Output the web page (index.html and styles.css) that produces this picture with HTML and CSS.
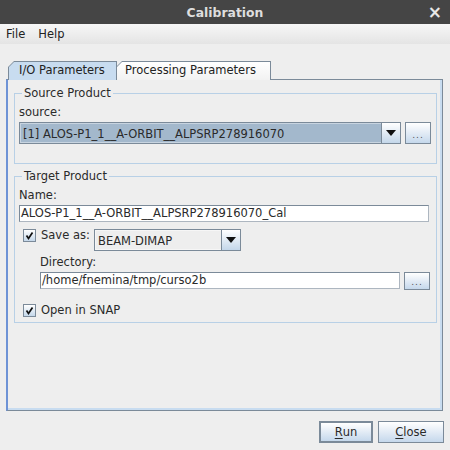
FILE: index.html
```html
<!DOCTYPE html>
<html>
<head>
<meta charset="utf-8">
<link rel="stylesheet" href="styles.css">
</head>
<body>
<div class="titlebar">
  <span class="title">Calibration</span>
  <span class="close">×</span>
</div>
<div class="menubar">
  <span class="menu">File</span>
  <span class="menu">Help</span>
</div>
<div class="main">
  <div class="tabs">
    <div class="tab tab-active"><div class="tab-in">I/O Parameters</div></div>
    <div class="tab tab-idle"><div class="tab-in">Processing Parameters</div></div>
  </div>
  <div class="panel">
    <fieldset class="group group-source">
      <legend>Source Product</legend>
      <div class="label">source:</div>
      <div class="row">
        <div class="combo combo-source">
          <div class="combo-text">[1] ALOS-P1_1__A-ORBIT__ALPSRP278916070</div>
          <div class="combo-btn"><svg width="10" height="6" viewBox="0 0 10 6"><path d="M0 0H10L5 6Z" fill="#111"/></svg></div>
        </div>
        <div class="btn dots">...</div>
      </div>
    </fieldset>
    <fieldset class="group group-target">
      <legend>Target Product</legend>
      <div class="label">Name:</div>
      <div class="field field-name">ALOS-P1_1__A-ORBIT__ALPSRP278916070_Cal</div>
      <div class="check-row save-row">
        <div class="check"><svg width="11" height="11" viewBox="0 0 11 11"><path d="M2.5 5.5L4.5 8.5L8.5 2.5" fill="none" stroke="#111" stroke-width="1.7"/></svg></div>
        <span class="check-label">Save as:</span>
        <div class="combo combo-format">
          <div class="combo-text">BEAM-DIMAP</div>
          <div class="combo-btn"><svg width="10" height="6" viewBox="0 0 10 6"><path d="M0 0H10L5 6Z" fill="#111"/></svg></div>
        </div>
      </div>
      <div class="indent">
        <div class="label">Directory:</div>
        <div class="row">
          <div class="field field-dir">/home/fnemina/tmp/curso2b</div>
          <div class="btn dots dots-dir">...</div>
        </div>
      </div>
      <div class="check-row open-row">
        <div class="check"><svg width="11" height="11" viewBox="0 0 11 11"><path d="M2.5 5.5L4.5 8.5L8.5 2.5" fill="none" stroke="#111" stroke-width="1.7"/></svg></div>
        <span class="check-label">Open in SNAP</span>
      </div>
    </fieldset>
  </div>
  <div class="footer">
    <div class="btn action run"><u>R</u>un</div>
    <div class="btn action close-btn"><u>C</u>lose</div>
  </div>
</div>
</body>
</html>
```

FILE: styles.css
```css
* { box-sizing: border-box; }
html, body { margin: 0; padding: 0; }
body {
  width: 450px;
  height: 450px;
  overflow: hidden;
  background: #eeeeee;
  font-family: "DejaVu Sans", sans-serif;
  font-size: 11.5px;
  color: #2a2a2a;
  display: flex;
  flex-direction: column;
}
.titlebar {
  height: 24px;
  background: #454545;
  display: flex;
  align-items: center;
  justify-content: center;
  position: relative;
  color: #dedede;
}
.title { font-weight: bold; font-size: 12.4px; }
.close {
  position: absolute;
  right: 8px;
  top: 2px;
  font-size: 17px;
  font-weight: bold;
  color: #e8e8e8;
}
.menubar {
  height: 20px;
  background: linear-gradient(#f7f7f7, #e4e4e4);
  display: flex;
  align-items: center;
  padding-left: 6px;
  gap: 13px;
  color: #222;
}
.main {
  flex: 1;
  display: flex;
  flex-direction: column;
  padding: 17px 7px 0 6px;
}
.tabs {
  display: flex;
  padding-left: 2px;
  height: 19px;
  position: relative;
  z-index: 1;
}
.tab {
  height: 19px;
  background: #7b8a99;
  padding: 1px 1px 0 1px;
  clip-path: polygon(0 6px, 6px 0, 100% 0, 100% 100%, 0 100%);
}
.tab-in {
  height: 18px;
  padding-left: 10px;
  line-height: 17px;
  clip-path: polygon(0 5px, 5px 0, 100% 0, 100% 100%, 0 100%);
  color: #222;
}
.tab-active { width: 109px; }
.tab-active .tab-in { background: #c8dcf0; height: 19px; }
.tab-idle { width: 155px; margin-left: -1px; }
.tab-idle .tab-in { background: linear-gradient(#ffffff, #f2f2f2); padding-left: 8px; }
.panel {
  flex: 1;
  border: 1px solid #7b8a99;
  border-left: 2px solid #6e93d6;
  box-shadow: inset -2px -2px 0 #c8dcf0;
  padding: 6px 5px 0 6px;
  margin-top: -1px;
}
.group {
  margin: 0;
  border: 1px solid #b8d0e6;
  padding: 5px 4px 0 4px;
  min-width: 0;
}
.group legend {
  padding: 0 2px;
  margin-left: 3px;
  line-height: 14px;
  color: #2a2a2a;
}
.group-source { height: 78px; padding-bottom: 18px; }
.group-target { margin-top: 5px; height: 154px; }
.label { line-height: 14px; height: 14px; }
.row { display: flex; align-items: stretch; margin-top: 3px; }
.combo {
  display: flex;
  border: 1px solid #7b8a99;
  background: #a3b8cc;
}
.combo-source { width: 382px; height: 22px; }
.combo-text {
  flex: 1;
  padding-left: 2px;
  line-height: 20px;
  border: 1px solid #c8d4e0;
  border-right: none;
  white-space: nowrap;
  overflow: hidden;
}
.combo-btn {
  width: 19px;
  border-left: 1px solid #7b8a99;
  background: linear-gradient(#ffffff, #c4d7ea);
  display: flex;
  align-items: center;
  justify-content: center;
}
.combo-btn svg { display: block; }
.btn {
  border: 1px solid #7b8a99;
  background: linear-gradient(#ffffff 0%, #eef3f9 30%, #c5d8ec 100%);
  display: flex;
  align-items: center;
  justify-content: center;
  color: #2a2a2a;
}
.dots {
  width: 26px;
  height: 22px;
  margin-left: 4px;
  font-size: 9px;
  letter-spacing: 1px;
  color: #555;
  padding-top: 3px;
}
.field {
  background: #fff;
  border: 1px solid #7b8a99;
  border-right-color: #adb6c0;
  border-bottom-color: #adb6c0;
  height: 17px;
  line-height: 15px;
  padding-left: 1px;
  white-space: nowrap;
  color: #2a2a2a;
}
.field-name { margin-top: 3px; width: 410px; }
.check-row { display: flex; align-items: center; }
.save-row { margin-top: 7px; padding-left: 4px; height: 21px; align-items: flex-start; }
.check {
  width: 13px;
  height: 13px;
  border: 1px solid #7b8a99;
  background: linear-gradient(#ffffff, #c4d7ea);
  display: flex;
  align-items: center;
  justify-content: center;
}
.check svg { display: block; }
.check-label { margin-left: 5px; line-height: 13px; }
.save-row .check-label { width: 53px; }
.combo-format {
  width: 147px;
  height: 22px;
  background: #eeeeee;
  margin-top: 0;
}
.combo-format .combo-text { border-color: #f6f6f6; line-height: 20px; padding-left: 2px; }
.indent { padding-left: 21px; margin-top: 5px; }
.field-dir { width: 360px; }
.dots-dir { height: 18px; padding-top: 2px; }
.open-row { margin-top: 14px; padding-left: 4px; }
.footer {
  height: 39px;
  display: flex;
  justify-content: flex-end;
  padding-top: 10px;
  gap: 5px;
  margin-right: -1px;
}
.action { height: 22px; color: #2a2a2a; }
.run { width: 54px; border: 2px solid #7b8a99; }
.close-btn { width: 66px; }
u { text-decoration: underline; text-underline-offset: 2px; }
```
